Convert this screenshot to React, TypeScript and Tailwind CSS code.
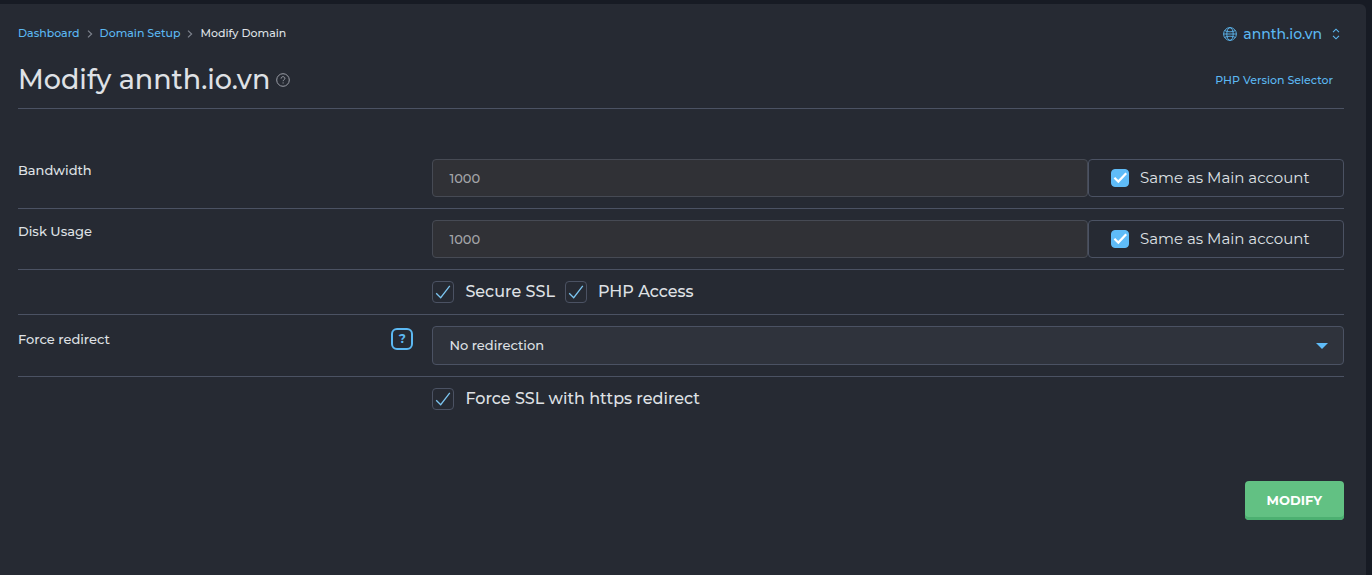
import { useState } from "react";
import type { ReactNode } from "react";

function Chevron() {
  return (
    <svg className="mt-0.5 h-2 w-1.5 shrink-0" viewBox="0 0 6 8" fill="none" stroke="#7d828d" strokeWidth="1.2" aria-hidden="true">
      <path d="M1 0.6 4.6 4 1 7.4" />
    </svg>
  );
}

function GlobeIcon() {
  return (
    <svg className="size-3.5 shrink-0" viewBox="0 0 14 14" fill="none" stroke="#5cb8f2" strokeWidth="0.9" aria-hidden="true">
      <circle cx="7" cy="7" r="6.4" />
      <ellipse cx="7" cy="7" rx="3.2" ry="6.4" />
      <path d="M.6 7h12.8M1.6 3.6c3.200 1.600 7.600 1.600 10.800 0M1.600 10.400c3.200-1.600 7.600-1.600 10.800 0" />
    </svg>
  );
}

function SortIcon() {
  return (
    <svg className="h-3 w-2 shrink-0" viewBox="0 0 8 12" fill="none" stroke="#5cb8f2" strokeWidth="1.1" aria-hidden="true">
      <path d="M1 4.200 4 1.200 7 4.200M1 7.800 4 10.800 7 7.800" />
    </svg>
  );
}

function HelpCircle() {
  return (
    <svg className="size-3.5" viewBox="0 0 14 14" fill="none" stroke="#9a9da6" strokeWidth="1" aria-hidden="true">
      <circle cx="7" cy="7" r="6.300" />
      <path d="M5.100 5.600c0-1.200.8-1.900 1.900-1.900s1.900.7 1.900 1.700c0 1.400-1.800 1.400-1.800 2.800M7.100 9.400v1.100" />
    </svg>
  );
}

function OutlineCheck({ id, label }: { id: string; label: string }) {
  return (
    <label htmlFor={id} className="flex items-center gap-[11px] text-[16px] leading-5 font-medium">
      <span className="grid size-[22px]">
        <input
          id={id}
          type="checkbox"
          defaultChecked
          className="peer col-start-1 row-start-1 size-[22px] appearance-none rounded border border-[#4b5263]"
        />
        <svg
          className="pointer-events-none col-start-1 row-start-1 size-[22px] opacity-0 peer-checked:opacity-100"
          viewBox="0 0 22 22"
          fill="none"
          stroke="#7cc5f0"
          strokeWidth="1.300"
          aria-hidden="true"
        >
          <path d="M4.200 12.200 8.700 16.700 17.800 4.800" />
        </svg>
      </span>
      {label}
    </label>
  );
}

function LimitRow({ id, label }: { id: string; label: string }) {
  const [same, setSame] = useState(true);
  return (
    <Row label={<label htmlFor={id}>{label}</label>}>
      <div className="flex">
        <input
          id={id}
          type="text"
          defaultValue="1000"
          disabled={same}
          className="h-[38px] min-w-0 flex-1 rounded border border-[#464a54] bg-[#303136] px-4 text-[13px] font-medium text-[#a3a4a8]"
        />
        <label
          htmlFor={`${id}-same`}
          className="flex h-[38px] w-64 items-center gap-[11px] rounded border border-[#4b5263] pl-[22px] text-[15px]"
        >
          <span className="grid size-[18px]">
            <input
              id={`${id}-same`}
              type="checkbox"
              checked={same}
              onChange={(e) => setSame(e.target.checked)}
              className="peer col-start-1 row-start-1 size-[18px] appearance-none rounded border border-[#5fbcf8] checked:bg-[#5fbcf8]"
            />
            <svg
              className="pointer-events-none col-start-1 row-start-1 size-[18px] opacity-0 peer-checked:opacity-100"
              viewBox="0 0 18 18"
              fill="none"
              stroke="#ffffff"
              strokeWidth="2.200"
              aria-hidden="true"
            >
              <path d="M3.400 8.800 7.300 12.600 15.200 4.200" />
            </svg>
          </span>
          Same as Main account
        </label>
      </div>
    </Row>
  );
}

function Row({ label, help, last, children }: { label?: ReactNode; help?: ReactNode; last?: boolean; children: ReactNode }) {
  return (
    <div className={`grid grid-cols-[5fr_11fr] py-[11px] ${last ? "" : "border-b border-[#4b5263]"}`}>
      <div className="flex items-center justify-between self-start pr-[19px] text-[13px] leading-[22px] font-medium">
        {label}
        {help}
      </div>
      {children}
    </div>
  );
}

export default function App() {
  return (
    <div className="flex min-h-screen flex-col bg-[#171b24] pt-1 pr-1.5 font-['Montserrat','Inter',sans-serif] text-[#dfe1e5]">
      <main className="flex-1 rounded-tr-md bg-[#262a33] pt-5 pr-[22px] pb-14 pl-[18px]">
        <header className="border-b border-[#4b5263] pb-2">
          <div className="flex items-start justify-between">
            <nav aria-label="Breadcrumb" className="flex items-center gap-[7px] text-[11px] leading-[18px] font-medium">
              <a href="#dashboard" className="text-[#5cb8f2]">Dashboard</a>
              <Chevron />
              <a href="#domains" className="text-[#5cb8f2]">Domain Setup</a>
              <Chevron />
              <span aria-current="page">Modify Domain</span>
            </nav>
            <button type="button" className="flex items-center gap-1.5 pr-1 text-[14px] leading-5 font-medium text-[#5cb8f2]">
              <GlobeIcon />
              annth.io.vn
              <span className="pl-1"><SortIcon /></span>
            </button>
          </div>
          <div className="flex items-center justify-between pt-4">
            <div className="flex items-center gap-1.5">
              <h1 className="text-[27px] leading-10 font-medium">Modify annth.io.vn</h1>
              <button type="button" aria-label="Help"><HelpCircle /></button>
            </div>
            <a href="#php" className="pr-[11px] text-[11px] font-medium text-[#5cb8f2]">PHP Version Selector</a>
          </div>
        </header>

        <form onSubmit={(e) => e.preventDefault()} className="pt-[39px]">
          <LimitRow id="bandwidth" label="Bandwidth" />
          <LimitRow id="disk" label="Disk Usage" />
          <Row>
            <div className="flex gap-2.5">
              <OutlineCheck id="ssl" label="Secure SSL" />
              <OutlineCheck id="php-access" label="PHP Access" />
            </div>
          </Row>
          <Row
            label={<label htmlFor="redirect">Force redirect</label>}
            help={
              <button
                type="button"
                aria-label="Force redirect help"
                className="my-0.5 flex size-[22px] items-center justify-center rounded-md border-2 border-[#5cb8f2] text-[12px] leading-none font-bold text-[#5cb8f2]"
              >
                ?
              </button>
            }
          >
            <div className="grid items-center">
              <select
                id="redirect"
                className="col-start-1 row-start-1 h-[39px] w-full appearance-none rounded border border-[#4b5263] bg-[#2f333c] px-4 text-[13px] font-medium"
              >
                <option>No redirection</option>
                <option>With www</option>
                <option>Without www</option>
              </select>
              <svg
                className="pointer-events-none col-start-1 row-start-1 mr-4 h-1.5 w-3 justify-self-end"
                viewBox="0 0 12 6"
                fill="#5fbcf8"
                aria-hidden="true"
              >
                <path d="M0 0h12L6 6Z" />
              </svg>
            </div>
          </Row>
          <Row last>
            <OutlineCheck id="force-ssl" label="Force SSL with https redirect" />
          </Row>
          <div className="flex justify-end pt-[60px]">
            <button
              type="submit"
              className="h-[39px] rounded bg-[#62c183] px-[22px] text-[13px] font-bold text-white shadow-[inset_0_-3px_0_#4cb071]"
            >
              MODIFY
            </button>
          </div>
        </form>
      </main>
    </div>
  );
}
